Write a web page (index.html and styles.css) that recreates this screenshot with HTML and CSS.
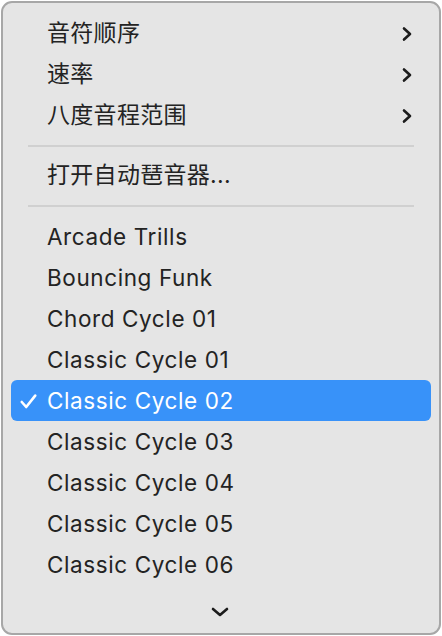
FILE: index.html
```html
<!DOCTYPE html>
<html lang="zh-CN">
<head>
<meta charset="utf-8">
<link rel="stylesheet" href="styles.css">
</head>
<body>
<div class="menu">
  <div class="item cjk"><span class="label">音符顺序</span><svg class="sub" viewBox="0 0 10 16"><path d="M2 2.5 L8 8 L2 13.5"/></svg></div>
  <div class="item cjk"><span class="label">速率</span><svg class="sub" viewBox="0 0 10 16"><path d="M2 2.5 L8 8 L2 13.5"/></svg></div>
  <div class="item cjk"><span class="label">八度音程范围</span><svg class="sub" viewBox="0 0 10 16"><path d="M2 2.5 L8 8 L2 13.5"/></svg></div>
  <div class="sep"></div>
  <div class="item cjk"><span class="label">打开自动琶音器...</span></div>
  <div class="sep"></div>
  <div class="item"><span class="label">Arcade Trills</span></div>
  <div class="item"><span class="label">Bouncing Funk</span></div>
  <div class="item"><span class="label">Chord Cycle 01</span></div>
  <div class="item"><span class="label">Classic Cycle 01</span></div>
  <div class="item selected"><svg class="check" viewBox="0 0 17 15"><path d="M1.8 8 L6.2 13 L15.2 1.6"/></svg><span class="label">Classic Cycle 02</span></div>
  <div class="item"><span class="label">Classic Cycle 03</span></div>
  <div class="item"><span class="label">Classic Cycle 04</span></div>
  <div class="item"><span class="label">Classic Cycle 05</span></div>
  <div class="item"><span class="label">Classic Cycle 06</span></div>
  <div class="more"><svg class="down" viewBox="0 0 18 10"><path d="M2 2 L9 8 L16 2"/></svg></div>
</div>
</body>
</html>
```
FILE: styles.css
```css
* { box-sizing: border-box; }
html, body { margin: 0; padding: 0; background: #ffffff; }
body {
  font-family: Inter, "Noto Sans CJK SC", sans-serif;
  color: #232323;
}
.menu {
  margin: 1px;
  width: 440px;
  height: 634px;
  border: 2px solid #a7a7a7;
  border-radius: 11px;
  background: #e5e5e5;
  padding: 10px 8px 0 8px;
  display: flex;
  flex-direction: column;
  overflow: hidden;
}
.item {
  position: relative;
  height: 41px;
  display: flex;
  align-items: center;
  padding-left: 36px;
  padding-right: 19px;
  border-radius: 6px;
  font-size: 22.5px;
  letter-spacing: 0.6px;
  line-height: 41px;
}
.item.cjk { font-size: 23px; letter-spacing: 0.3px; }
.label { flex: 1; white-space: nowrap; }
.sub {
  width: 10px;
  height: 16px;
  fill: none;
  stroke: #1c1c1c;
  stroke-width: 2.6;
  stroke-linecap: round;
  stroke-linejoin: round;
}
.sep {
  height: 20px;
  display: flex;
  align-items: center;
  padding: 0 17px 0 17px;
}
.sep::before {
  content: "";
  display: block;
  height: 2px;
  width: 100%;
  background: #d0d0d0;
}
.selected {
  background: #3892f9;
  color: #ffffff;
}
.check {
  position: absolute;
  left: 9px;
  top: 14px;
  width: 17px;
  height: 15px;
  fill: none;
  stroke: #ffffff;
  stroke-width: 2.6;
  stroke-linecap: round;
  stroke-linejoin: round;
}
.more {
  height: 50px;
  display: flex;
  justify-content: center;
  align-items: center;
  padding-right: 3px;
  padding-top: 6px;
}
.down {
  width: 18px;
  height: 10px;
  fill: none;
  stroke: #1c1c1c;
  stroke-width: 2.6;
  stroke-linecap: round;
  stroke-linejoin: round;
}
```
